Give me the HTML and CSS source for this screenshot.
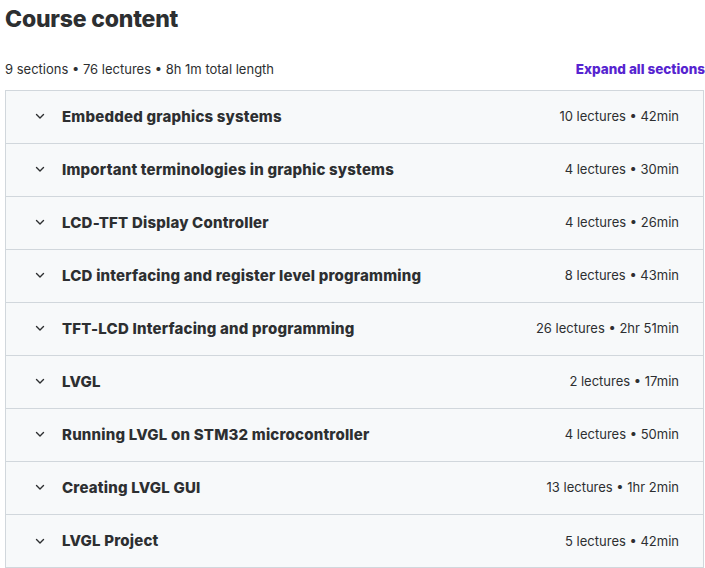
FILE: index.html
```html
<!DOCTYPE html>
<html lang="en">
<head>
    <meta charset="UTF-8">
    <meta name="viewport" content="width=device-width, initial-scale=1.0">
    <title>Course content</title>
    <link rel="stylesheet" href="styles.css">
</head>
<body>
    <h2 class="title">Course content</h2>

    <div class="summary">
        <span>9 sections • 76 lectures • 8h 1m total length</span>
        <button class="expand-btn">Expand all sections</button>
    </div>

    <div class="sections">
        <div class="section">
            <span class="chevron"><svg width="12" height="12" viewBox="0 0 12 12"><path d="M2.5 4.5 L6 8 L9.5 4.5" /></svg></span>
            <span class="section-title">Embedded graphics systems</span>
            <span class="section-meta">10 lectures • 42min</span>
        </div>
        <div class="section">
            <span class="chevron"><svg width="12" height="12" viewBox="0 0 12 12"><path d="M2.5 4.5 L6 8 L9.5 4.5" /></svg></span>
            <span class="section-title">Important terminologies in graphic systems</span>
            <span class="section-meta">4 lectures • 30min</span>
        </div>
        <div class="section">
            <span class="chevron"><svg width="12" height="12" viewBox="0 0 12 12"><path d="M2.5 4.5 L6 8 L9.5 4.5" /></svg></span>
            <span class="section-title">LCD-TFT Display Controller</span>
            <span class="section-meta">4 lectures • 26min</span>
        </div>
        <div class="section">
            <span class="chevron"><svg width="12" height="12" viewBox="0 0 12 12"><path d="M2.5 4.5 L6 8 L9.5 4.5" /></svg></span>
            <span class="section-title">LCD interfacing and register level programming</span>
            <span class="section-meta">8 lectures • 43min</span>
        </div>
        <div class="section">
            <span class="chevron"><svg width="12" height="12" viewBox="0 0 12 12"><path d="M2.5 4.5 L6 8 L9.5 4.5" /></svg></span>
            <span class="section-title">TFT-LCD Interfacing and programming</span>
            <span class="section-meta">26 lectures • 2hr 51min</span>
        </div>
        <div class="section">
            <span class="chevron"><svg width="12" height="12" viewBox="0 0 12 12"><path d="M2.5 4.5 L6 8 L9.5 4.5" /></svg></span>
            <span class="section-title">LVGL</span>
            <span class="section-meta">2 lectures • 17min</span>
        </div>
        <div class="section">
            <span class="chevron"><svg width="12" height="12" viewBox="0 0 12 12"><path d="M2.5 4.5 L6 8 L9.5 4.5" /></svg></span>
            <span class="section-title">Running LVGL on STM32 microcontroller</span>
            <span class="section-meta">4 lectures • 50min</span>
        </div>
        <div class="section">
            <span class="chevron"><svg width="12" height="12" viewBox="0 0 12 12"><path d="M2.5 4.5 L6 8 L9.5 4.5" /></svg></span>
            <span class="section-title">Creating LVGL GUI</span>
            <span class="section-meta">13 lectures • 1hr 2min</span>
        </div>
        <div class="section">
            <span class="chevron"><svg width="12" height="12" viewBox="0 0 12 12"><path d="M2.5 4.5 L6 8 L9.5 4.5" /></svg></span>
            <span class="section-title">LVGL Project</span>
            <span class="section-meta">5 lectures • 42min</span>
        </div>
    </div>
</body>
</html>
```

FILE: styles.css
```css
body {
    margin: 0;
    padding: 0 0 0 5px;
    font-family: Inter, "Noto Sans", sans-serif;
    color: #2d2f31;
    background-color: #fff;
}
.title {
    margin: 0;
    padding-top: 4px;
    font-size: 23px;
    font-weight: 800;
    line-height: 30px;
    letter-spacing: -0.2px;
}
.summary {
    display: flex;
    justify-content: space-between;
    align-items: center;
    margin-top: 25px;
    height: 20px;
    font-size: 13px;
}
.expand-btn {
    background: none;
    border: none;
    padding: 0;
    font-family: inherit;
    font-size: 13.5px;
    font-weight: 800;
    color: #5624d0;
    cursor: pointer;
}
.sections {
    margin-top: 11px;
    width: 697px;
    border: 1px solid #d1d7dc;
}
.section {
    display: flex;
    align-items: center;
    box-sizing: border-box;
    height: 53px;
    padding: 0 24px 2px 28px;
    background-color: #f7f9fa;
    border-bottom: 1px solid #d1d7dc;
}
.section:last-child {
    height: 52px;
    padding-bottom: 1px;
    border-bottom: none;
}
.chevron {
    display: flex;
    width: 12px;
    margin-right: 16px;
}
.chevron path {
    fill: none;
    stroke: #2d2f31;
    stroke-width: 1.4;
    stroke-linecap: round;
    stroke-linejoin: round;
}
.section-title {
    flex: 1;
    font-size: 15px;
    font-weight: 800;
    letter-spacing: 0.2px;
}
.section-meta {
    font-size: 13px;
}
```
